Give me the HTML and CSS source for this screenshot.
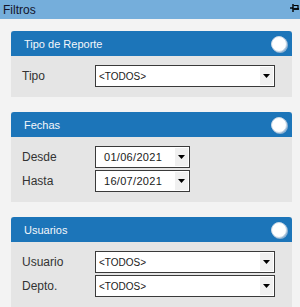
FILE: index.html
```html
<!DOCTYPE html>
<html lang="es">
<head>
  <meta charset="UTF-8" />
  <title>Filtros</title>
  <link rel="stylesheet" href="styles.css">
</head>
<body>
  <div class="titlebar">
    <span>Filtros</span>
    <svg class="pin" viewBox="0 0 9 8" xmlns="http://www.w3.org/2000/svg">
      <path d="M0 4h3" stroke="#000" stroke-width="1.4"/>
      <path d="M3 0v8" stroke="#000" stroke-width="1.4"/>
      <path d="M3.5 1.5h4.5v3.5H3.5" fill="none" stroke="#000" stroke-width="1.2"/>
      <path d="M3.5 5h5.5" stroke="#000" stroke-width="1.6"/>
    </svg>
  </div>

  <div class="filters">
    <!-- Tipo de reporte -->
    <div class="panel">
      <div class="panel-head">
        <span>Tipo de Reporte</span>
        <div class="toggle"></div>
      </div>
      <div class="panel-body">
        <div class="row">
          <label>Tipo</label>
          <div class="combo wide">
            <span class="value">&lt;TODOS&gt;</span>
            <span class="arrow"><svg viewBox="0 0 7 4"><path d="M0 0h7L3.5 4z" fill="#000"/></svg></span>
          </div>
        </div>
      </div>
    </div>

    <!-- Fechas -->
    <div class="panel">
      <div class="panel-head">
        <span>Fechas</span>
        <div class="toggle"></div>
      </div>
      <div class="panel-body">
        <div class="row">
          <label>Desde</label>
          <div class="combo date">
            <span class="value">01/06/2021</span>
            <span class="arrow"><svg viewBox="0 0 7 4"><path d="M0 0h7L3.5 4z" fill="#000"/></svg></span>
          </div>
        </div>
        <div class="row">
          <label>Hasta</label>
          <div class="combo date">
            <span class="value">16/07/2021</span>
            <span class="arrow"><svg viewBox="0 0 7 4"><path d="M0 0h7L3.5 4z" fill="#000"/></svg></span>
          </div>
        </div>
      </div>
    </div>

    <!-- Usuarios -->
    <div class="panel">
      <div class="panel-head">
        <span>Usuarios</span>
        <div class="toggle"></div>
      </div>
      <div class="panel-body">
        <div class="row">
          <label>Usuario</label>
          <div class="combo wide">
            <span class="value">&lt;TODOS&gt;</span>
            <span class="arrow"><svg viewBox="0 0 7 4"><path d="M0 0h7L3.5 4z" fill="#000"/></svg></span>
          </div>
        </div>
        <div class="row">
          <label>Depto.</label>
          <div class="combo wide">
            <span class="value">&lt;TODOS&gt;</span>
            <span class="arrow"><svg viewBox="0 0 7 4"><path d="M0 0h7L3.5 4z" fill="#000"/></svg></span>
          </div>
        </div>
      </div>
    </div>
  </div>
</body>
</html>
```

FILE: styles.css
```css
* { box-sizing: border-box; }
body {
  margin: 0;
  height: 307px;
  overflow: hidden;
  background: #f3f3f3;
  font-family: 'Liberation Sans', Arial, sans-serif;
}
.titlebar {
  height: 19px;
  background: #75aedb;
  display: flex;
  align-items: center;
  justify-content: space-between;
  padding: 0 1px 0 3px;
  font-size: 12px;
  color: #14142a;
}
.pin {
  width: 9px;
  height: 8px;
  margin-bottom: 3px;
}
.filters {
  display: flex;
  flex-direction: column;
  gap: 15px;
  padding: 12px 8px 0 11px;
}
.panel {
  background: #e5e5e5;
}
.panel-head {
  height: 25px;
  background: #1c75b9;
  border-radius: 3px 3px 0 0;
  display: flex;
  align-items: center;
  justify-content: space-between;
  padding: 0 5px 0 13px;
  color: #f4f7fb;
  font-size: 11px;
}
.toggle {
  width: 16px;
  height: 16px;
  border-radius: 50%;
  background: #fff;
  border: 1px solid #c9d8e6;
  box-shadow: 1px 1px 0 #8fb3d3;
  margin-top: 1px;
}
.panel-body {
  display: flex;
  flex-direction: column;
  gap: 2px;
  padding: 9px 17px 10px 11px;
}
.row {
  display: flex;
  align-items: center;
}
.row label {
  width: 73px;
  font-size: 12px;
  color: #333;
}
.combo {
  height: 22px;
  border: 1px solid #3a3a3a;
  background: #fff;
  display: flex;
  align-items: stretch;
  padding: 1px;
}
.combo.wide {
  flex: 1;
}
.combo.date {
  width: 95px;
}
.value {
  flex: 1;
  display: flex;
  align-items: center;
  padding-left: 2px;
  font-size: 10px;
  color: #1a1a1a;
}
.date .value {
  padding-left: 7px;
  font-size: 11px;
  letter-spacing: 0.3px;
}
.arrow {
  width: 13px;
  background: #f0f0f0;
  display: flex;
  align-items: center;
  justify-content: center;
}
.arrow svg {
  width: 7px;
  height: 4px;
}
```
